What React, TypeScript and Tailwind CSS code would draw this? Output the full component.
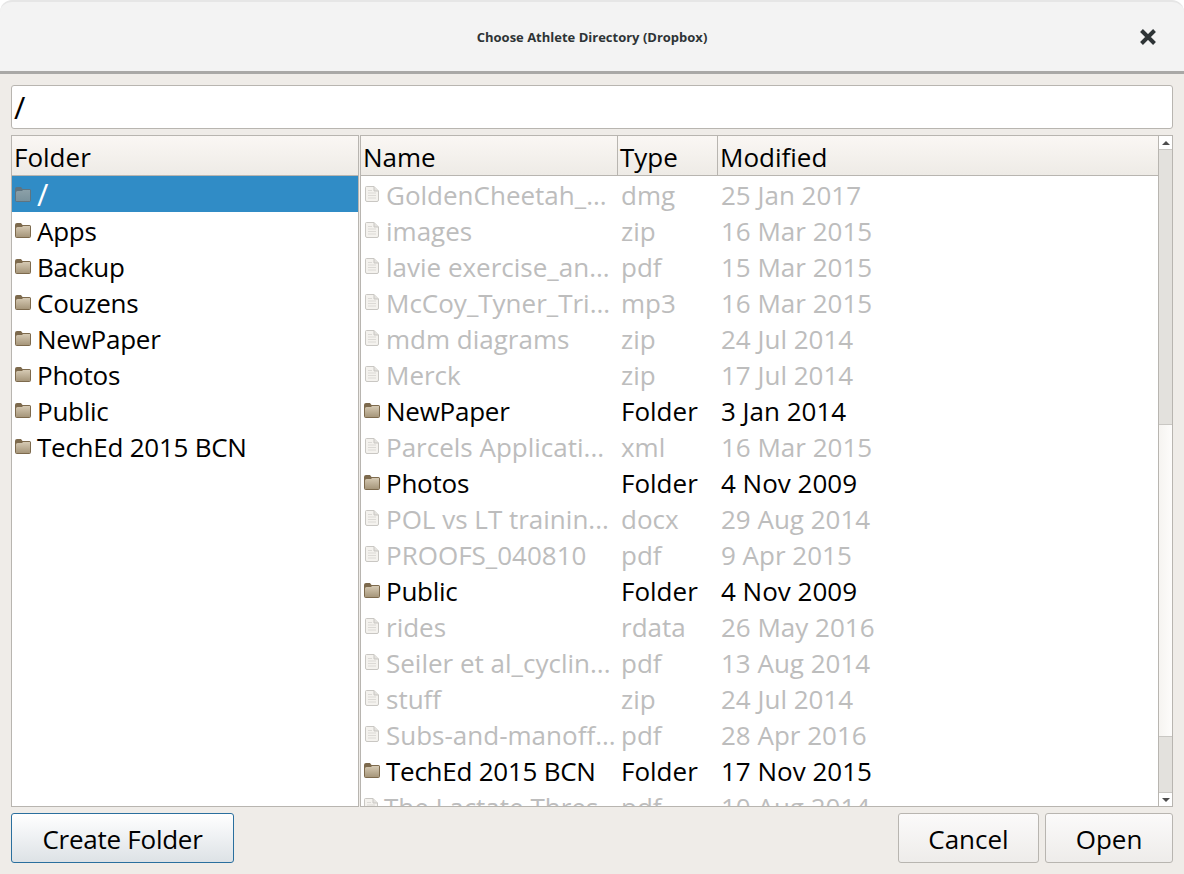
const font = "font-['Open_Sans','Noto_Sans',sans-serif]"

type Entry = { name: string; type: string; modified: string; folder?: boolean }

const folders = ['Apps', 'Backup', 'Couzens', 'NewPaper', 'Photos', 'Public', 'TechEd 2015 BCN']

const entries: Entry[] = [
  { name: 'GoldenCheetah_...', type: 'dmg', modified: '25 Jan 2017' },
  { name: 'images', type: 'zip', modified: '16 Mar 2015' },
  { name: 'lavie exercise_an...', type: 'pdf', modified: '15 Mar 2015' },
  { name: 'McCoy_Tyner_Tri...', type: 'mp3', modified: '16 Mar 2015' },
  { name: 'mdm diagrams', type: 'zip', modified: '24 Jul 2014' },
  { name: 'Merck', type: 'zip', modified: '17 Jul 2014' },
  { name: 'NewPaper', type: 'Folder', modified: '3 Jan 2014', folder: true },
  { name: 'Parcels Applicati...', type: 'xml', modified: '16 Mar 2015' },
  { name: 'Photos', type: 'Folder', modified: '4 Nov 2009', folder: true },
  { name: 'POL vs LT trainin...', type: 'docx', modified: '29 Aug 2014' },
  { name: 'PROOFS_040810', type: 'pdf', modified: '9 Apr 2015' },
  { name: 'Public', type: 'Folder', modified: '4 Nov 2009', folder: true },
  { name: 'rides', type: 'rdata', modified: '26 May 2016' },
  { name: 'Seiler et al_cyclin...', type: 'pdf', modified: '13 Aug 2014' },
  { name: 'stuff', type: 'zip', modified: '24 Jul 2014' },
  { name: 'Subs-and-manoff...', type: 'pdf', modified: '28 Apr 2016' },
  { name: 'TechEd 2015 BCN', type: 'Folder', modified: '17 Nov 2015', folder: true },
  { name: 'The Lactate Thres...', type: 'pdf', modified: '10 Aug 2014' },
]

function FolderIcon({ selected }: { selected?: boolean }) {
  const back = selected ? '#5f7480' : '#7d6a4d'
  const top = selected ? '#8ba0a8' : '#d6cab4'
  const bottom = selected ? '#7a929c' : '#a6967a'
  const id = selected ? 'fold-sel' : 'fold'
  return (
    <svg width="16" height="15" viewBox="0 0 16 15" className="shrink-0">
      <defs>
        <linearGradient id={id} x1="0" y1="0" x2="0" y2="1">
          <stop offset="0" stopColor={top} />
          <stop offset="1" stopColor={bottom} />
        </linearGradient>
      </defs>
      <path d="M0 2 Q0 0 2 0 H6 L7.5 2 H14.5 Q16 2 16 3.5 V13 Q16 15 14 15 H2 Q0 15 0 13 Z" fill={back} />
      <path d="M1 5.5 Q1 4 2.5 4 H7 L8 3 H15 V14 H1 Z" fill={`url(#${id})`} />
    </svg>
  )
}

function FileIcon() {
  return (
    <svg width="14" height="16" viewBox="0 0 14 16" className="shrink-0">
      <path d="M1.5 0.5 H9 L13.5 5 V14 Q13.5 15.5 12 15.5 H2 Q0.5 15.5 0.5 14 V1.5 Q0.5 0.5 1.5 0.5 Z" fill="#f4f2ee" stroke="#c9c7c3" />
      <path d="M9 0.5 V5 H13.5" fill="#e4e2de" stroke="#c9c7c3" />
      <path d="M3 4.5 H7 M3 7 H11 M3 9.5 H11 M3 12 H11" stroke="#dcdad6" />
    </svg>
  )
}

function HeaderCell({ label, className }: { label: string; className: string }) {
  return (
    <div className={`flex h-10 items-center border-b border-[#b8b5b0] bg-gradient-to-b from-[#faf7f4] to-[#eeebe6] pt-[3px] pl-[2px] ${className}`}>
      {label}
    </div>
  )
}

function FileRow({ entry }: { entry: Entry }) {
  return (
    <div className={`flex h-9 shrink-0 items-center whitespace-nowrap pt-[2px] ${entry.folder ? 'text-black' : 'text-[#bdbdbd]'}`}>
      <div className="flex w-[257px] items-center gap-[6px] pl-[3px]">
        <span className="-mt-[2px] flex w-[16px] justify-center">{entry.folder ? <FolderIcon /> : <FileIcon />}</span>
        <span className={entry.folder ? 'tracking-[-0.25px]' : ''}>{entry.name}</span>
      </div>
      <div className="w-[100px] pl-[3px]">{entry.type}</div>
      <div className="pl-[3px]">{entry.modified}</div>
    </div>
  )
}

function Button({ label, className }: { label: string; className: string }) {
  return (
    <button className={`flex h-[50px] items-center justify-center rounded-[3px] border pt-[2px] text-[26px] text-black ${className}`}>
      {label}
    </button>
  )
}

export default function App() {
  return (
    <div className={`flex h-[874px] w-[1184px] flex-col overflow-hidden bg-white text-[26px] leading-none text-black ${font}`}>
      {/* Title bar */}
      <div className="relative flex h-[74px] shrink-0 items-center justify-center rounded-t-[12px] border-t-2 border-b-[3px] border-t-[#e6e6e6] border-b-[#a9a8a6] bg-[#f3f3f3] pt-[1px]">
        <span className="text-[13px] font-bold text-[#2e3436]">Choose Athlete Directory (Dropbox)</span>
        <svg width="18" height="18" viewBox="0 0 18 18" className="absolute right-[27px] top-[26px]">
          <path d="M2.5 2.5 L15.5 15.5 M15.5 2.5 L2.5 15.5" stroke="#2e3436" strokeWidth="4" />
        </svg>
      </div>

      <div className="flex flex-1 flex-col bg-[#efece8]">
        {/* Path field */}
        <div className="mx-[11px] mt-[11px] flex h-[44px] shrink-0 items-center rounded-[3px] border border-[#b8b5b0] bg-white pl-[2px] text-[31px]">
          /
        </div>

        {/* Panes */}
        <div className="mx-[11px] mt-[6px] flex h-[672px] shrink-0 gap-[1px]">
          <div className="flex w-[348px] flex-col overflow-hidden border border-[#b8b5b0] bg-white">
            <HeaderCell label="Folder" className="" />
            <div className="flex h-9 items-center gap-[6px] bg-[#308cc6] pl-[3px] text-white">
              <FolderIcon selected />
              <span className="pt-[1px] text-[31px]">/</span>
            </div>
            {folders.map((name) => (
              <div key={name} className="flex h-9 items-center gap-[6px] pl-[3px]">
                <FolderIcon />
                <span className="pt-[2px] tracking-[-0.25px]">{name}</span>
              </div>
            ))}
          </div>

          <div className="flex min-w-0 flex-1 border border-[#b8b5b0] bg-white">
            <div className="flex min-w-0 flex-1 flex-col overflow-hidden">
              <div className="flex shrink-0">
                <HeaderCell label="Name" className="w-[257px] border-r" />
                <HeaderCell label="Type" className="w-[100px] border-r" />
                <HeaderCell label="Modified" className="flex-1" />
              </div>
              {entries.map((entry) => (
                <FileRow key={entry.name} entry={entry} />
              ))}
            </div>

            {/* Scrollbar */}
            <div className="flex w-[14px] shrink-0 flex-col border-l border-[#b8b5b0] bg-[#e3e1dd]">
              <div className="flex h-[14px] shrink-0 items-center justify-center border-b border-[#c9c7c3] bg-white">
                <span className="h-0 w-0 border-x-[4px] border-b-[4px] border-x-transparent border-b-[#4d4d4d]" />
              </div>
              <div className="h-[274px] shrink-0" />
              <div className="h-[313px] shrink-0 border-y border-[#c9c7c3] bg-gradient-to-r from-[#f6f4f1] to-[#fdfcfb]" />
              <div className="flex-1" />
              <div className="flex h-[14px] shrink-0 items-center justify-center border-t border-[#c9c7c3] bg-white">
                <span className="h-0 w-0 border-x-[4px] border-t-[4px] border-x-transparent border-t-[#4d4d4d]" />
              </div>
            </div>
          </div>
        </div>

        {/* Buttons */}
        <div className="mx-[11px] mt-[6px] flex shrink-0 items-center">
          <Button label="Create Folder" className="w-[223px] border-[#2a6f9e] bg-gradient-to-b from-white to-[#dde2e6] tracking-[-0.25px]" />
          <div className="flex-1" />
          <Button label="Cancel" className="w-[141px] border-[#b8b5b0] bg-gradient-to-b from-[#fbfafa] to-[#eeecea]" />
          <Button label="Open" className="ml-[6px] w-[128px] border-[#b8b5b0] bg-gradient-to-b from-[#fbfafa] to-[#eeecea]" />
        </div>
      </div>
    </div>
  )
}
